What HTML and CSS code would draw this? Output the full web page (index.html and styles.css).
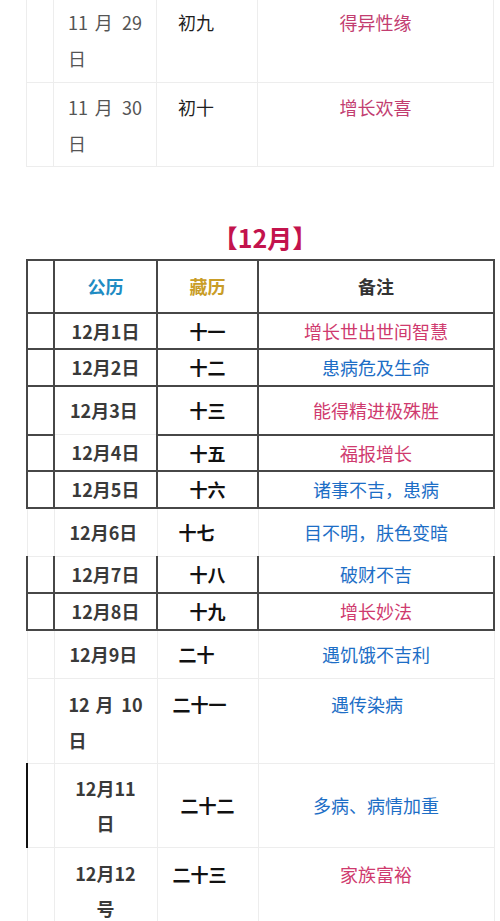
FILE: index.html
```html
<!DOCTYPE html>
<html lang="zh-CN">
<head>
<meta charset="utf-8">
<title>藏历12月</title>
<link rel="stylesheet" href="styles.css">
</head>
<body>
<table class="cal nov">
  <colgroup><col class="c0"><col class="c1"><col class="c2"><col class="c3"></colgroup>
  <tr class="lt h82 top1">
    <td></td>
    <td class="date-j">11 月 29 日</td>
    <td class="lunar-l">初九</td>
    <td class="note pink">得异性缘</td>
  </tr>
  <tr class="lt h84 top2">
    <td></td>
    <td class="date-j">11 月 30 日</td>
    <td class="lunar-l">初十</td>
    <td class="note pink">增长欢喜</td>
  </tr>
</table>

<div class="month-title">【12月】</div>

<table class="cal dec">
  <colgroup><col class="c0"><col class="c1"><col class="c2"><col class="c3"></colgroup>
  <tr class="dk h53">
    <th></th>
    <th class="hd-gl">公历</th>
    <th class="hd-zl">藏历</th>
    <th class="hd-bz">备注</th>
  </tr>
  <tr class="dk h36">
    <td></td><td class="date">12月1日</td><td class="lunar">十一</td><td class="note pink">增长世出世间智慧</td>
  </tr>
  <tr class="dk h37">
    <td></td><td class="date">12月2日</td><td class="lunar">十二</td><td class="note blue">患病危及生命</td>
  </tr>
  <tr class="dk h49 r3">
    <td></td><td class="date left">12月3日</td><td class="lunar">十三</td><td class="note pink">能得精进极殊胜</td>
  </tr>
  <tr class="dk h36 r4">
    <td></td><td class="date">12月4日</td><td class="lunar">十五</td><td class="note pink">福报增长</td>
  </tr>
  <tr class="dk h37">
    <td></td><td class="date">12月5日</td><td class="lunar">十六</td><td class="note blue">诸事不吉，患病</td>
  </tr>
  <tr class="lt h49">
    <td></td><td class="date left">12月6日</td><td class="lunar left21">十七</td><td class="note blue">目不明，肤色变暗</td>
  </tr>
  <tr class="dk h36 r7">
    <td></td><td class="date">12月7日</td><td class="lunar">十八</td><td class="note blue">破财不吉</td>
  </tr>
  <tr class="dk h37">
    <td></td><td class="date">12月8日</td><td class="lunar">十九</td><td class="note pink">增长妙法</td>
  </tr>
  <tr class="lt h49">
    <td></td><td class="date left">12月9日</td><td class="lunar left21">二十</td><td class="note blue">遇饥饿不吉利</td>
  </tr>
  <tr class="lt h85 r10">
    <td></td><td class="date date-j">12 月 10 日</td><td class="lunar left15">二十一</td><td class="note blue shift">遇传染病</td>
  </tr>
  <tr class="lt h84 r11">
    <td></td><td class="date two">12月11<br>日</td><td class="lunar">二十二</td><td class="note blue">多病、病情加重</td>
  </tr>
  <tr class="lt h85 r12">
    <td></td><td class="date two">12月12<br>号</td><td class="lunar left15">二十三</td><td class="note pink">家族富裕</td>
  </tr>
</table>
</body>
</html>
```

FILE: styles.css
```css
html, body {
  margin: 0;
  padding: 0;
  background: #ffffff;
}

body {
  font-family: "Noto Sans CJK SC", "Noto Sans", sans-serif;
  font-size: 18px;
  color: #222222;
}

.cal {
  border-collapse: collapse;
  table-layout: fixed;
  width: 467px;
  margin-left: 26px;
}

.c0 { width: 27px; }
.c1 { width: 103px; }
.c2 { width: 101px; }
.c3 { width: 236px; }

.cal td,
.cal th {
  padding: 0;
  text-align: center;
  vertical-align: middle;
  line-height: 24px;
  font-weight: normal;
}

.lt td { border: 1px solid #ededed; }
.dk td, .dk th { border: 2px solid #474747; }

.h36 { height: 36px; }
.h37 { height: 37px; }
.h49 { height: 49px; }
.h53 { height: 53px; }
.h82 { height: 82px; }
.h84 { height: 84px; }
.h85 { height: 85px; }

/* November (partial) */
.nov .top1 td { border-top: none; }
.nov td {
  vertical-align: top;
  line-height: 36px;
}
.nov .top1 td { padding-top: 4px; }
.nov .top2 td { padding-top: 6px; }
.nov .date-j {
  color: #555555;
  padding-left: 14px;
  padding-right: 14px;
  text-align: justify;
  text-align-last: left;
}
.nov .lunar-l {
  text-align: left;
  padding-left: 21px;
  color: #1e1e1e;
}
.nov .note { color: #c23d70; }

/* title */
.month-title {
  width: 467px;
  margin: 55px 0 7px 26px;
  padding-left: 11px;
  box-sizing: border-box;
  text-align: center;
  font-size: 25px;
  line-height: 30px;
  font-weight: bold;
  color: #c3134d;
}

/* December */
.hd-gl { color: #1f8cc3; }
.hd-zl { color: #c99d27; }
.hd-bz { color: #333333; }
.dec th { font-weight: bold !important; }

.dec .date {
  font-weight: bold;
  color: #3a3a3a;
}
.dec .lunar {
  font-weight: bold;
  color: #111111;
}
.pink { color: #cf3a6e; }
.blue { color: #1d6ec6; }

.dec .left {
  text-align: left;
  padding-left: 15px;
}
.dec .left21 {
  text-align: left;
  padding-left: 21px;
}
.dec .left15 {
  text-align: left;
  padding-left: 15px;
}

/* merged/irregular borders */
.r3 .date { border-bottom: 1px solid #ededed; }
.r4 .date { border-top: 1px solid #ededed; }
.r7 td { border-top: 1px solid #ededed; }

.r10 td,
.r12 td {
  vertical-align: top;
  line-height: 36px;
}
.r10 td { padding-top: 7px; }
.r12 td { padding-top: 8px; }

.dec .date-j {
  text-align: justify;
  text-align-last: left;
  padding-left: 14px;
  padding-right: 14px;
}
.dec .r10 .lunar.left15 { padding-left: 15px; }
.shift { padding-right: 18px !important; }

.r11 td { line-height: 35px; }
.r11 td:first-child { border-left: 2px solid #111111; }
.dec .two { line-height: 35px; }
```
